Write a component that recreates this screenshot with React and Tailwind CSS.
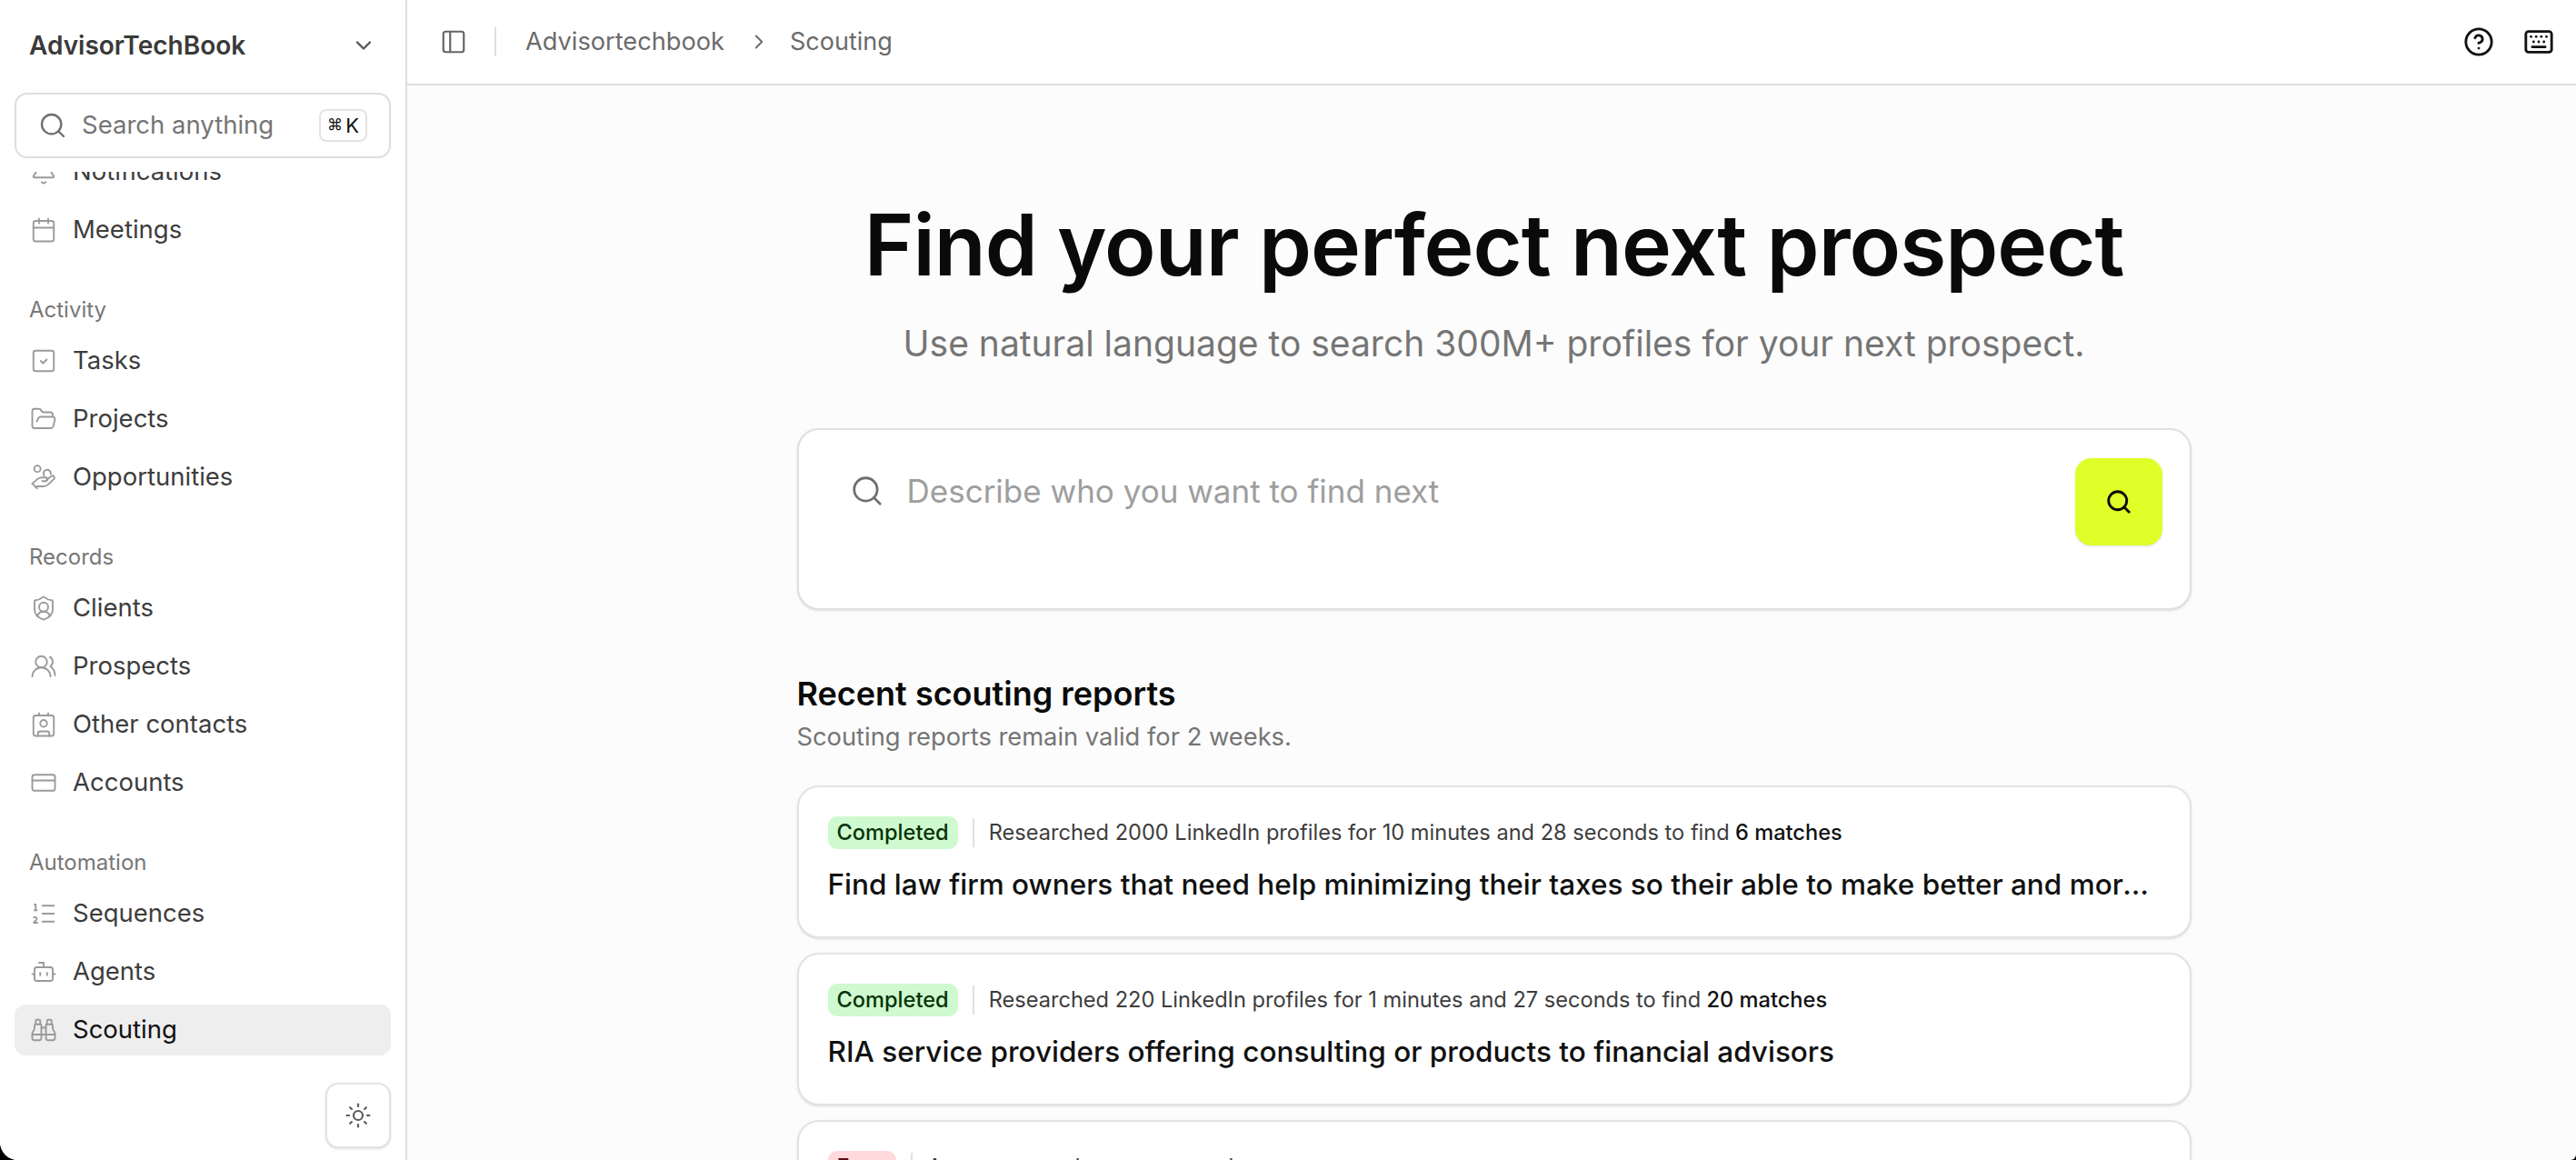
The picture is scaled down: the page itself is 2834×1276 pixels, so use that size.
import React from 'react';
import {
    Bell, Calendar, FolderOpen, ShieldUser, UsersRound, Contact,
    CreditCard, ListOrdered, Bot, Binoculars, Sun, Search, ChevronDown, ChevronRight,
    PanelLeft, CircleHelp, Keyboard,
} from 'lucide-react';

// Small check inside a square, lighter than lucide's SquareCheck
const TaskIcon = ({ className }) => (
    <svg viewBox="0 0 24 24" fill="none" stroke="currentColor" strokeWidth={1.5} strokeLinecap="round" strokeLinejoin="round" className={className}>
        <rect x="3" y="3" width="18" height="18" rx="2" />
        <path d="M9.5 12l2 2 3.2-3.2" />
    </svg>
);

const OpportunityIcon = ({ className }) => (
    <svg viewBox="0 0 24 24" fill="none" stroke="currentColor" strokeWidth={1.5} strokeLinecap="round" strokeLinejoin="round" className={className}>
        <circle cx="6.5" cy="4.5" r="2.8" />
        <path d="M12.5 10.5a3.2 3.2 0 1 1 5.8-1.5" />
        <path d="M2 17.5l5-4.2c1-.8 2-1.1 3.4-1.1h3.4a1.6 1.6 0 0 1 0 3.2h-3" />
        <path d="M6.2 21.8L2 17.5" />
        <path d="M6.2 20h5.6c1.6 0 2.8-.5 4-1.5l5.4-5a1.8 1.8 0 0 0-2.5-2.5l-4 3.2" />
    </svg>
);

const NAV_SECTIONS = [
    { title: 'Activity', items: [['Tasks', TaskIcon], ['Projects', FolderOpen], ['Opportunities', OpportunityIcon]] },
    { title: 'Records', items: [['Clients', ShieldUser], ['Prospects', UsersRound], ['Other contacts', Contact], ['Accounts', CreditCard]] },
    { title: 'Automation', items: [['Sequences', ListOrdered], ['Agents', Bot], ['Scouting', Binoculars, true]] },
];

const NavItem = ({ label, icon: Icon, active }) => (
    <div className={`flex h-[56px] shrink-0 items-center gap-[17px] rounded-[12px] px-[17px] text-[27.5px] ${active ? 'bg-[#eeeeee] text-[#111111]' : 'text-[#3d3d3d]'}`}>
        <Icon className="h-[30px] w-[30px] shrink-0 text-[#9a9a9a]" strokeWidth={1.5} />
        <span>{label}</span>
    </div>
);

const Sidebar = () => (
    <aside className="flex h-full w-[448px] shrink-0 flex-col overflow-hidden border-r-2 border-[#dedede] bg-white">
        <div className="flex h-[100px] shrink-0 items-center justify-between pr-[32px] pl-[32px]">
            <span className="text-[28px] font-semibold text-[#3a3a3a]">AdvisorTechBook</span>
            <ChevronDown className="h-[28px] w-[28px] text-[#555555]" strokeWidth={2} />
        </div>
        <div className="mx-[16px] mt-[2px] mb-[15px] flex h-[72px] shrink-0 items-center rounded-[14px] border-2 border-[#dedede] bg-white pr-[24px] pl-[24px]">
            <Search className="h-[32px] w-[32px] shrink-0 text-[#6e6e6e]" strokeWidth={1.75} />
            <span className="ml-[16px] flex-1 text-[27.5px] text-[#757575]">Search anything</span>
            <span className="flex h-[36px] w-[53px] items-center justify-center gap-[3px] rounded-[8px] border-2 border-[#e3e3e3] text-[22px] text-[#111111]">
                <span className="text-[17px]">⌘</span>K
            </span>
        </div>
        <div className="flex flex-1 flex-col overflow-hidden px-[16px]">
            <div className="-mt-[28px] flex flex-col gap-[8px]">
                <NavItem label="Notifications" icon={Bell} />
                <NavItem label="Meetings" icon={Calendar} />
            </div>
            {NAV_SECTIONS.map((section) => (
                <div key={section.title} className="mt-[45px] flex flex-col gap-[8px]">
                    <div className="mb-[5px] h-[30px] pl-[16px] text-[24px] leading-[30px] text-[#777777]">{section.title}</div>
                    {section.items.map(([label, icon, active]) => (
                        <NavItem key={label} label={label} icon={icon} active={active} />
                    ))}
                </div>
            ))}
        </div>
        <div className="flex shrink-0 justify-end px-[16px] pb-[13px]">
            <button className="flex h-[72px] w-[72px] items-center justify-center rounded-[14px] border-2 border-[#e3e3e3] bg-white shadow-sm">
                <Sun className="h-[30px] w-[30px] text-[#5c5c5c]" strokeWidth={1.75} />
            </button>
        </div>
    </aside>
);

const Header = () => (
    <header className="flex h-[94px] shrink-0 items-center border-b-2 border-[#dedede] bg-white pr-[24px] pl-[36px]">
        <PanelLeft className="h-[30px] w-[30px] text-[#666666]" strokeWidth={1.75} />
        <div className="ml-[30px] h-[32px] w-[2px] bg-[#dedede]" />
        <span className="ml-[32px] text-[27.2px] text-[#6b6b6b]">Advisortechbook</span>
        <ChevronRight className="ml-[25px] h-[26px] w-[26px] text-[#6b6b6b]" strokeWidth={1.75} />
        <span className="ml-[21px] text-[27px] text-[#6b6b6b]">Scouting</span>
        <div className="ml-auto flex items-center gap-[32px]">
            <CircleHelp className="h-[34px] w-[34px] text-[#111111]" strokeWidth={2} />
            <Keyboard className="h-[34px] w-[34px] text-[#111111]" strokeWidth={2} />
        </div>
    </header>
);

const Badge = ({ tone, children }) => (
    <span className={`flex h-[36px] items-center rounded-[10px] px-[10px] text-[23.6px] font-medium ${tone === 'red' ? 'bg-[#ffd9dc] text-[#5a0a10]' : 'bg-[#cff9cf] text-[#063306]'}`}>
        {children}
    </span>
);

const ReportCard = ({ status, tone, summary, matches, title }) => (
    <div className="flex h-[168px] shrink-0 flex-col rounded-[24px] border-2 border-[#e3e3e3] bg-white px-[32px] pt-[32px] shadow-sm">
        <div className="flex items-center">
            <Badge tone={tone}>{status}</Badge>
            <div className="mx-[16px] h-[32px] w-[2px] bg-[#e0e0e0]" />
            <span className="text-[23.6px] text-[#3d3d3d]">
                {summary}
                {matches && <span className="font-medium text-[#111111]"> {matches}</span>}
            </span>
        </div>
        <div className="mt-[15px] truncate text-[31.5px] font-medium text-[#111111]">{title}</div>
    </div>
);

export default function App() {
    return (
        <div className="h-[1276px] w-[2834px] overflow-hidden bg-black">
            <div className="flex h-full w-full overflow-hidden rounded-br-[6px] rounded-bl-[20px] bg-[#fcfcfc] font-['Inter',sans-serif]">
                <Sidebar />
                <main className="flex min-w-0 flex-1 flex-col">
                    <Header />
                    <div className="flex-1 overflow-hidden pl-[5px]">
                        <div className="mx-auto flex w-[1534px] flex-col">
                            <h1 className="mt-[120px] text-center text-[93px] leading-[110px] font-semibold tracking-[-1px] text-[#0a0a0a]">
                                Find your perfect next prospect
                            </h1>
                            <p className="mt-[29px] text-center text-[39px] leading-[50px] text-[#757575]">
                                Use natural language to search 300M+ profiles for your next prospect.
                            </p>
                            <div className="mt-[68px] flex h-[200px] shrink-0 items-start rounded-[24px] border-2 border-[#e0e0e0] bg-white pr-[30px] pl-[56px] shadow-sm">
                                <Search className="mt-[48px] h-[38px] w-[38px] shrink-0 text-[#6e6e6e]" strokeWidth={1.75} />
                                <span className="mt-[45px] ml-[25px] flex-1 text-[35px] leading-[44px] text-[#9e9e9e]">Describe who you want to find next</span>
                                <button className="mt-[31px] flex h-[96px] w-[96px] items-center justify-center rounded-[18px] bg-[#dfff29] shadow-sm">
                                    <Search className="h-[30px] w-[30px] text-[#0a0a0a]" strokeWidth={2.25} />
                                </button>
                            </div>
                            <h2 className="mt-[70px] text-[36px] leading-[44px] font-semibold text-[#0a0a0a]">Recent scouting reports</h2>
                            <p className="mt-[8px] text-[27.3px] leading-[36px] text-[#757575]">Scouting reports remain valid for 2 weeks.</p>
                            <div className="mt-[35px] flex flex-col gap-[16px]">
                                <ReportCard
                                    status="Completed"
                                    summary="Researched 2000 LinkedIn profiles for 10 minutes and 28 seconds to find"
                                    matches="6 matches"
                                    title="Find law firm owners that need help minimizing their taxes so their able to make better and more informed decisions"
                                />
                                <ReportCard
                                    status="Completed"
                                    summary="Researched 220 LinkedIn profiles for 1 minutes and 27 seconds to find"
                                    matches="20 matches"
                                    title="RIA service providers offering consulting or products to financial advisors"
                                />
                                <ReportCard status="Error" tone="red" summary="An unexpected error occurred" title="" />
                            </div>
                        </div>
                    </div>
                </main>
            </div>
        </div>
    );
}
